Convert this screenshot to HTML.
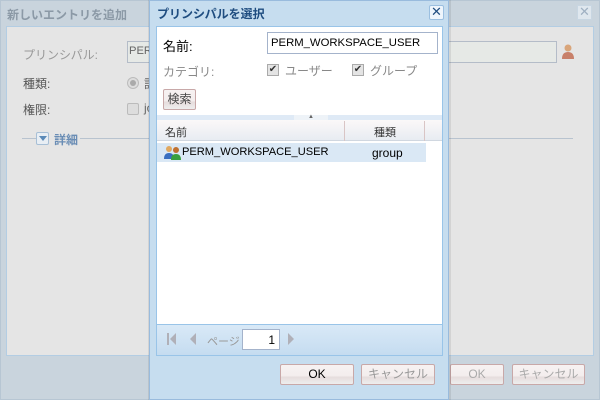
<!DOCTYPE html>
<html><head><meta charset="utf-8"><style>
*{box-sizing:border-box;margin:0;padding:0}
body{width:600px;height:400px;overflow:hidden;background:#c9d4dd;font-family:"Liberation Sans","Noto Sans CJK JP",sans-serif;font-size:12px;position:relative}
.a{position:absolute}
.btn{position:absolute;height:21px;border:1px solid #c8a8a8;border-radius:2px;background:linear-gradient(#f7f2f2 0,#f3eded 60%,#e5dbdb 60%,#eee 100%);text-align:center;line-height:19px;font-size:12px}
</style></head><body>
<div class="a" style="left:0;top:0;width:600px;height:400px;border:1px solid #b7c6d3;background:#c9d4dd"></div>
<div class="a" style="left:7px;top:6px;color:#8b99a6;font-weight:bold;font-size:12px">新しいエントリを追加</div>
<div class="a" style="left:577px;top:5px;width:15px;height:15px;border:1px solid #c8d6e2;background:#dfe7ee;color:#9fb0c2;font-size:13px;line-height:12px;text-align:center">✕</div>
<div class="a" style="left:6px;top:26px;width:588px;height:330px;background:#e5e5e5;border:1px solid #b3cde3"></div>
<div class="a" style="left:23px;top:46px;color:#999">プリンシパル:</div>
<div class="a" style="left:127px;top:41px;width:430px;height:22px;border:1px solid #b4bcc8;background:#e6e9e6;padding:3px 1px;color:#666;font-size:11.2px">PERM_WORKSPACE_USER</div>
<svg class="a" style="left:561px;top:43px" width="14" height="16"><circle cx="7" cy="5" r="3.5" fill="#d9a57a"/><path d="M1 16 Q1 9 7 9 Q13 9 13 16Z" fill="#c8806a"/></svg>
<div class="a" style="left:23px;top:75px;color:#555">種類:</div>
<div class="a" style="left:127px;top:77px;width:12px;height:12px;border-radius:50%;border:1px solid #bbb;background:#ddd"><div style="margin:2px;width:6px;height:6px;border-radius:50%;background:#aaa"></div></div>
<div class="a" style="left:144px;top:75px;color:#666">許</div>
<div class="a" style="left:23px;top:101px;color:#555">権限:</div>
<div class="a" style="left:127px;top:103px;width:12px;height:12px;border:1px solid #bbb;background:#ddd;border-radius:2px"></div>
<div class="a" style="left:144px;top:101px;color:#666">jo</div>
<div class="a" style="left:22px;top:138px;width:14px;height:1px;background:#b8c3cf"></div>
<div class="a" style="left:36px;top:132px;width:13px;height:13px;border:1px solid #a7bfd6;border-radius:2px;background:#e8eef4"><div style="margin:3px auto;width:0;height:0;border-left:4px solid transparent;border-right:4px solid transparent;border-top:5px solid #5b8ab8"></div></div>
<div class="a" style="left:54px;top:131px;color:#6a8db5;font-weight:bold">詳細</div>
<div class="a" style="left:80px;top:138px;width:493px;height:1px;background:#b8c3cf"></div>
<div class="btn" style="left:450px;top:364px;width:54px;color:#aaa">OK</div>
<div class="btn" style="left:512px;top:364px;width:73px;color:#aaa">キャンセル</div>

<div class="a" style="left:148px;top:0;width:303px;height:400px;background:rgba(0,0,0,.08)"></div>
<div class="a" style="left:149px;top:0;width:300px;height:400px;background:#c6ddef;border:1px solid #99bbdd"></div>
<div class="a" style="left:157px;top:5px;color:#1f4d80;font-weight:bold">プリンシパルを選択</div>
<div class="a" style="left:429px;top:5px;width:15px;height:15px;border:1px solid #9bbfe0;background:#eef5fc;color:#1f4d80;font-size:13px;line-height:12px;text-align:center;border-radius:2px">✕</div>
<div class="a" style="left:156px;top:26px;width:287px;height:330px;background:#fff;border:1px solid #99c4e8"></div>
<div class="a" style="left:163px;top:36px;color:#000;font-size:13px">名前:</div>
<div class="a" style="left:267px;top:32px;width:171px;height:22px;border:1px solid #a4b3cb;padding:4px 3px;font-size:11.3px;color:#000">PERM_WORKSPACE_USER</div>
<div class="a" style="left:163px;top:63px;color:#888">カテゴリ:</div>
<div class="a" style="left:267px;top:64px;width:12px;height:12px;border:1px solid #aaa;background:#e4e4e4;font-size:10px;line-height:10px;text-align:center;color:#333">✔</div>
<div class="a" style="left:285px;top:62px;color:#888">ユーザー</div>
<div class="a" style="left:352px;top:64px;width:12px;height:12px;border:1px solid #aaa;background:#e4e4e4;font-size:10px;line-height:10px;text-align:center;color:#333">✔</div>
<div class="a" style="left:370px;top:62px;color:#888">グループ</div>
<div class="btn" style="left:163px;top:89px;width:33px;height:21px;color:#444">検索</div>
<div class="a" style="left:157px;top:115px;width:285px;height:6px;background:#dfeaf6"></div>
<div class="a" style="left:294px;top:115px;width:34px;height:5px;background:#eef3f8;font-size:6px;text-align:center;line-height:5px;color:#666">▲</div>
<div class="a" style="left:157px;top:120px;width:285px;height:21px;background:linear-gradient(#fbf8f8,#e8ecf2);border-bottom:1px solid #d0d7e0"></div>
<div class="a" style="left:344px;top:121px;width:1px;height:20px;background:#d9c5c5"></div>
<div class="a" style="left:424px;top:121px;width:1px;height:20px;background:#d9c5c5"></div>
<div class="a" style="left:165px;top:124px;color:#333;font-size:11px">名前</div>
<div class="a" style="left:374px;top:124px;color:#333;font-size:11px">種類</div>
<div class="a" style="left:157px;top:143px;width:269px;height:19px;background:#dae8f5"></div>
<svg class="a" style="left:164px;top:145px" width="17" height="15"><circle cx="5" cy="4" r="3" fill="#e0a860"/><path d="M0 14 Q0 8 5 8 Q10 8 10 14Z" fill="#3a6fc0"/><circle cx="12" cy="5" r="3" fill="#c07030"/><path d="M7 15 Q7 9 12 9 Q17 9 17 15Z" fill="#3aa040"/></svg>
<div class="a" style="left:182px;top:146px;color:#000;font-size:11.1px">PERM_WORKSPACE_USER</div>
<div class="a" style="left:372px;top:146px;color:#000;font-size:12px">group</div>
<div class="a" style="left:157px;top:324px;width:285px;height:31px;background:linear-gradient(#d9e9f7,#c5dcf0);border-top:1px solid #99c4e8"></div>
<div class="a" style="left:167px;top:333px;width:2px;height:12px;background:#b0b0b8"></div>
<div class="a" style="left:170px;top:333px;width:0;height:0;border-top:6px solid transparent;border-bottom:6px solid transparent;border-right:6px solid #b0b0b8"></div>
<div class="a" style="left:190px;top:333px;width:0;height:0;border-top:6px solid transparent;border-bottom:6px solid transparent;border-right:6px solid #b0b0b8"></div>
<div class="a" style="left:207px;top:333px;color:#999;font-size:11px">ページ</div>
<div class="a" style="left:242px;top:329px;width:38px;height:21px;background:#fff;border:1px solid #a4b3cb;text-align:right;padding:3px 4px;color:#000">1</div>
<div class="a" style="left:288px;top:333px;width:0;height:0;border-top:6px solid transparent;border-bottom:6px solid transparent;border-left:6px solid #b0b0b8"></div>
<div class="btn" style="left:280px;top:364px;width:74px;color:#000">OK</div>
<div class="btn" style="left:361px;top:364px;width:74px;color:#999">キャンセル</div>
</body></html>
